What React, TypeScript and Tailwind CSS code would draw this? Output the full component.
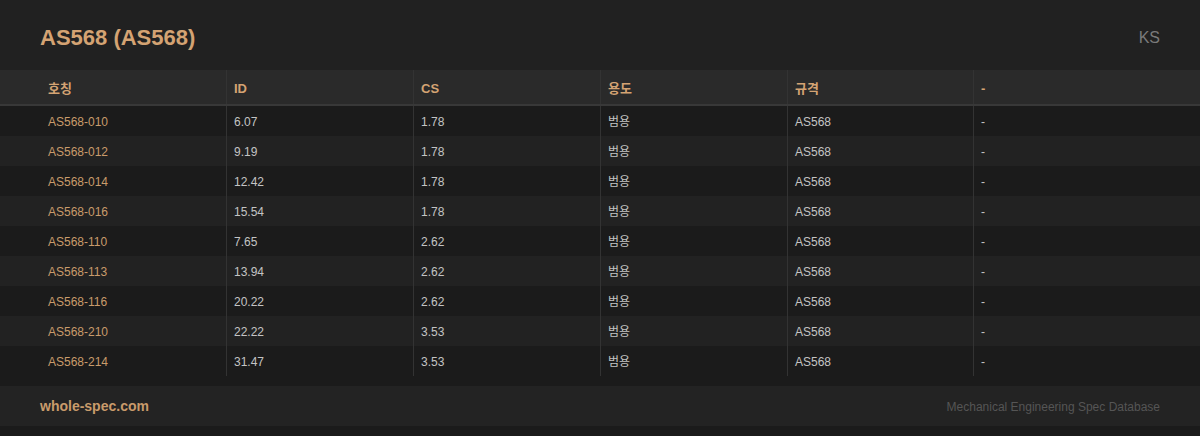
import React from "react";

const rows = [
  ["AS568-010", "6.07", "1.78"],
  ["AS568-012", "9.19", "1.78"],
  ["AS568-014", "12.42", "1.78"],
  ["AS568-016", "15.54", "1.78"],
  ["AS568-110", "7.65", "2.62"],
  ["AS568-113", "13.94", "2.62"],
  ["AS568-116", "20.22", "2.62"],
  ["AS568-210", "22.22", "3.53"],
  ["AS568-214", "31.47", "3.53"],
];

const headers = ["호칭", "ID", "CS", "용도", "규격", "-"];
const grid = "grid grid-cols-[226px_187px_187px_187px_186px_1fr]";

export default function App() {
  return (
    <div
      className="w-[1200px] h-[436px] bg-[#1f1f1f] overflow-hidden"
      style={{ fontFamily: '"Liberation Sans", Arial, "Noto Sans CJK KR", sans-serif' }}
    >
      <div className="h-[70px] flex items-center justify-between px-10 pt-[4px] bg-[#212121]">
        <h1 className="text-[22px] font-bold text-[#d4a373]">AS568 (AS568)</h1>
        <span className="text-[16px] text-[#7a7a7a] pt-[2px]">KS</span>
      </div>
      <div className="bg-[#1b1b1b]">
        <div className={`${grid} h-[36px] bg-[#2a2a2a] border-b-2 border-[#383838]`}>
          {headers.map((h, i) => (
            <div
              key={i}
              className={`flex items-center text-[13px] font-bold text-[#d4a373] pt-[4px] ${i === 0 ? "pl-12" : "pl-[7px] border-l border-[#333333]"}`}
            >
              {h}
            </div>
          ))}
        </div>
        {rows.map((r, idx) => {
          const cells = [r[0], r[1], r[2], "범용", "AS568", "-"];
          return (
            <div
              key={idx}
              className={`${grid} h-[30px] ${idx % 2 === 0 ? "bg-[#1b1b1b]" : "bg-[#222222]"}`}
            >
              {cells.map((c, i) => (
                <div
                  key={i}
                  className={`flex items-center text-[12px] pt-[2px] ${i === 0 ? "pl-12 text-[#c99b6b]" : "pl-[7px] border-l border-[#333333] text-[#c4c4c4]"}`}
                >
                  {c}
                </div>
              ))}
            </div>
          );
        })}
      </div>
      <div className="h-[10px] bg-[#1b1b1b]" />
      <div className="h-[40px] bg-[#232323] flex items-center justify-between px-10">
        <span className="text-[14px] font-bold text-[#c99b6b]">whole-spec.com</span>
        <span className="text-[12px] text-[#555555] pt-[2px]">Mechanical Engineering Spec Database</span>
      </div>
      <div className="h-[10px] bg-[#1b1b1b]" />
    </div>
  );
}
